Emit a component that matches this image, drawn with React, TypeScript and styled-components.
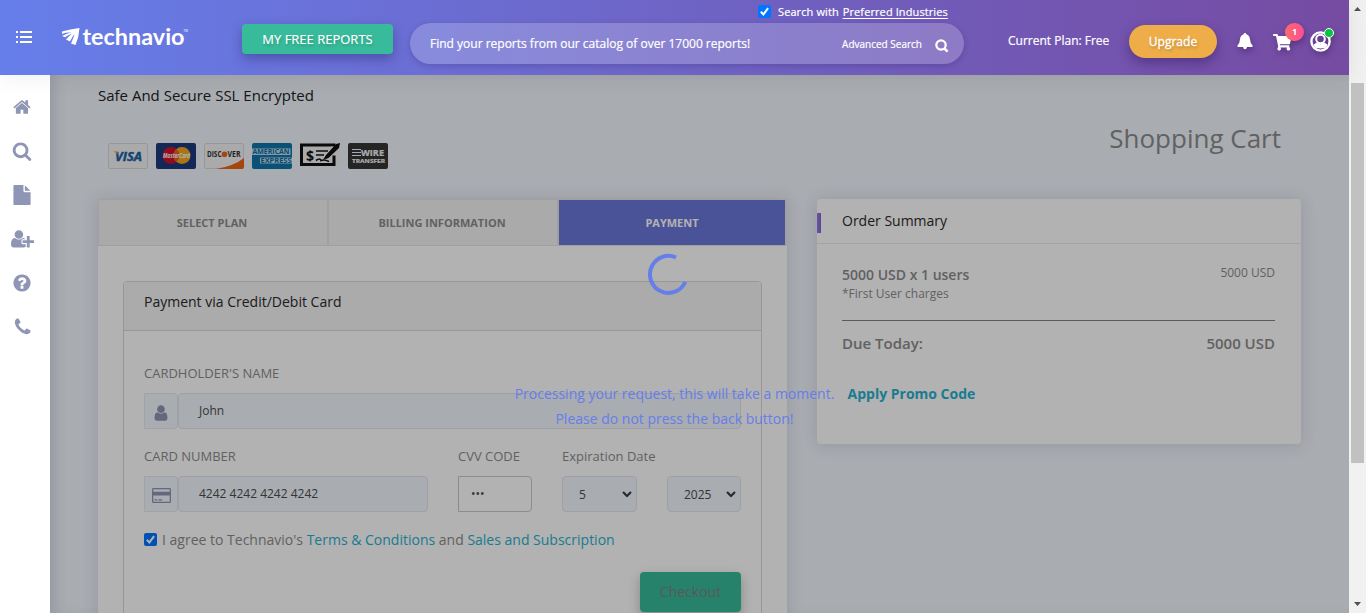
import React from 'react';
import styled, { createGlobalStyle } from 'styled-components';
import { FaShoppingCart } from 'react-icons/fa';

const GlobalStyle = createGlobalStyle`
  *, *::before, *::after { box-sizing: border-box; }
  html, body { margin: 0; padding: 0; overflow: hidden; }
  body { font-family: "Open Sans", "Liberation Sans", sans-serif; font-size: 14px; color: #8c8c8c; }
  svg { overflow: visible; }
`;

const Window = styled.div`
  display: flex;
  width: 1366px;
  height: 613px;
  overflow: hidden;
`;

const Page = styled.div`
  display: flex;
  flex-direction: column;
  width: 1349px;
  height: 613px;
`;

/* ---------- header ---------- */

const Header = styled.header`
  position: relative;
  z-index: 3;
  flex: none;
  display: flex;
  height: 75px;
  color: #fff;
  background: linear-gradient(90deg, #667eea 0%, #764ba2 100%);
  box-shadow: 0 1px 20px rgba(69, 65, 78, 0.1);
`;

const MenuButton = styled.div`
  width: 16px;
  height: 14px;
  margin: 30px 0 0 16px;
  svg { display: block; }
`;

const Logo = styled.div`
  width: 128px;
  height: 24px;
  margin: 25px 0 0 30px;
  svg { display: block; }
`;

const ReportsButton = styled.button`
  width: 151px;
  height: 30px;
  margin: 24px 0 0 52px;
  padding: 0;
  border: 0;
  border-radius: 4px;
  color: #fff;
  background: #38bb9b;
  font: 400 13px/30px "Open Sans", sans-serif;
  text-align: center;
  text-shadow: 1px 2px 3px rgba(0, 0, 0, 0.2);
  -webkit-text-stroke: 0.15px #fff;
  box-shadow: 0 5px 12px rgba(30, 20, 90, 0.35);
`;

const SearchArea = styled.div`
  width: 554px;
  margin-left: 17px;
`;

const SearchOption = styled.label`
  display: flex;
  align-items: center;
  height: 23px;
  padding-left: 348px;
  font-size: 11px;
  letter-spacing: 0.1px;
  white-space: nowrap;
  -webkit-text-stroke: 0.2px #fff;
  u { margin-left: 4px; text-underline-offset: 2px; }
`;

const CheckMark = styled.span<{ $size: number; $gap: number }>`
  flex: none;
  width: ${(p) => p.$size}px;
  height: ${(p) => p.$size}px;
  margin-right: ${(p) => p.$gap}px;
  border-radius: 2px;
  background: #0075ff;
  svg { display: block; width: 100%; height: 100%; }
`;

const SearchBar = styled.div`
  display: flex;
  align-items: center;
  height: 41px;
  padding: 0 15px 0 20px;
  border-radius: 21px;
  background: rgba(255, 255, 255, 0.2);
  box-shadow: 0 2px 6px rgba(40, 20, 90, 0.22);
  -webkit-text-stroke: 0.2px #fff;
`;

const SearchText = styled.span`
  flex: 1;
  font-size: 12px;
`;

const AdvancedLink = styled.span`
  margin-right: 13px;
  font-size: 10px;
`;

const SearchGlyph = styled.svg`
  width: 14px;
  height: 14px;
  margin-top: 4px;
`;

const PlanLabel = styled.span`
  width: 103px;
  margin: 32px 0 0 44px;
  font-size: 12px;
  line-height: 18px;
  white-space: nowrap;
  -webkit-text-stroke: 0.2px #fff;
`;

const UpgradeButton = styled.button`
  width: 88px;
  height: 33px;
  margin: 25px 0 0 18px;
  padding: 0;
  border: 0;
  border-radius: 17px;
  color: #fff;
  background: #eead48;
  font: 400 12px/33px "Open Sans", sans-serif;
  text-shadow: 1px 2px 3px rgba(0, 0, 0, 0.25);
  -webkit-text-stroke: 0.3px #fff;
  box-shadow: 0 5px 12px rgba(40, 15, 80, 0.4);
`;

const HeaderIcon = styled.div<{ $width: number; $top: number; $gap: number }>`
  position: relative;
  width: ${(p) => p.$width}px;
  height: 26px;
  margin: ${(p) => p.$top}px 0 0 ${(p) => p.$gap}px;
  filter: drop-shadow(1px 3px 3px rgba(30, 10, 60, 0.35));
  svg { display: block; }
`;

const CartCount = styled.span`
  position: absolute;
  left: 12px;
  top: -10px;
  width: 19px;
  height: 18px;
  border-radius: 9px;
  background: linear-gradient(90deg, #fb6c6c, #fc4e93);
  font-size: 9px;
  font-weight: 700;
  line-height: 18px;
  text-align: center;
`;

const OnlineDot = styled.span`
  position: absolute;
  left: 14px;
  top: -3px;
  width: 10px;
  height: 10px;
  border: 1px solid #fff;
  border-radius: 50%;
  background: #00c63f;
`;

/* ---------- body ---------- */

const Body = styled.div`
  display: flex;
  flex: 1;
  min-height: 0;
`;

const Sidebar = styled.nav`
  flex: none;
  display: flex;
  flex-direction: column;
  width: 50px;
  padding-top: 10px;
  background: #fff;
`;

const NavItem = styled.a`
  display: flex;
  align-items: center;
  justify-content: center;
  width: 44px;
  height: 44px;
  color: #8f95b4;
`;

const Main = styled.main`
  position: relative;
  flex: 1;
  height: 538px;
  padding: 10px 48px 0;
  overflow: hidden;
  background: #f2f6fd;
  box-shadow: inset 10px 0 14px -6px rgba(69, 65, 98, 0.16);
`;

const Veil = styled.div`
  position: absolute;
  inset: 0;
  background: rgba(0, 0, 0, 0.3);
`;

const Spinner = styled.svg`
  position: absolute;
  left: 597.5px;
  top: 178.5px;
`;

const Progress = styled.p`
  position: absolute;
  left: 0;
  top: 306px;
  width: 1249px;
  margin: 0;
  color: #667eea;
  font-size: 14px;
  line-height: 25px;
  text-align: center;
`;

const Intro = styled.div`
  display: flex;
  justify-content: space-between;
  height: 114px;
`;

const SecureTitle = styled.div`
  color: #222;
  font-size: 15px;
  line-height: 20px;
`;

const PaymentMarks = styled.div`
  display: flex;
  gap: 8px;
  margin: 38px 0 0 10px;
  svg { display: block; }
`;

const PageTitle = styled.h1`
  margin: 35px 20px 0 0;
  font-size: 26px;
  font-weight: 400;
  line-height: 36px;
`;

const Columns = styled.div`
  display: flex;
  align-items: flex-start;
  gap: 30px;
`;

const Checkout = styled.section`
  width: 689px;
  height: 430px;
  background: #fff;
  box-shadow: 0 1px 15px 1px rgba(69, 65, 98, 0.14);
`;

const Tabs = styled.div`
  display: flex;
  height: 47px;
  border: 1px solid #e5e5e5;
`;

const Tab = styled.div<{ $active?: boolean }>`
  flex: ${(p) => (p.$active ? '1' : '0 0 230px')};
  padding-right: ${(p) => (p.$active ? 0 : 2)}px;
  border-right: ${(p) => (p.$active ? '1px solid #e5e5e5' : '2px solid #e5e5e5')};
  color: ${(p) => (p.$active ? '#fff' : '#8c8c8c')};
  background: ${(p) => (p.$active ? '#6b76da' : '#f4f4f4')};
  font-size: 11px;
  font-weight: 700;
  line-height: 46px;
  text-align: center;
`;

const CardPanel = styled.div`
  height: 360px;
  margin: 35px 25px 0;
  border: 1px solid #d9d9d9;
  border-radius: 4px 4px 0 0;
`;

const PanelTitle = styled.h2`
  height: 49px;
  margin: 0;
  padding-left: 20px;
  border-bottom: 1px solid #d9d9d9;
  border-radius: 3px 3px 0 0;
  color: #2a2a2a;
  background: #f5f5f5;
  font-size: 14px;
  font-weight: 400;
  line-height: 40px;
`;

const Form = styled.div`
  padding: 32px 20px 0;
`;

const FieldRow = styled.div`
  display: flex;
  gap: 30px;
  margin-bottom: 17px;
`;

const Field = styled.div<{ $width: number }>`
  width: ${(p) => p.$width}px;
`;

const Label = styled.label`
  display: block;
  height: 20px;
  margin-bottom: 10px;
  font-size: 13px;
  line-height: 21px;
  white-space: nowrap;
`;

const InputGroup = styled.div`
  display: flex;
  height: 36px;
`;

const Addon = styled.span`
  display: flex;
  align-items: center;
  justify-content: center;
  width: 34px;
  padding-top: 3px;
  border: 1px solid #e6e8ee;
  border-radius: 0 4px 4px 0;
  color: #8f95b4;
  background: #f2f6fd;
`;

const Value = styled.span<{ $pad: number; $plain?: boolean; $lift?: number }>`
  display: flex;
  align-items: center;
  flex: 1;
  height: 36px;
  padding: 0 4px ${(p) => p.$lift ?? 0}px ${(p) => p.$pad}px;
  border: 1px solid ${(p) => (p.$plain ? '#c9c9c9' : '#e3e5ea')};
  border-radius: ${(p) => (p.$plain ? '0 4px 4px 0' : '4px')};
  color: #4c4c4c;
  background: ${(p) => (p.$plain ? '#fff' : '#f2f6fd')};
  font-size: 12px;
  svg { margin-left: auto; }
`;

const Agreement = styled.div`
  display: flex;
  align-items: center;
  height: 20px;
  font-size: 14px;
  white-space: pre;
`;

const Link = styled.a`
  color: #27b1cf;
`;

const CheckoutButton = styled.button`
  display: block;
  width: 101px;
  height: 40px;
  margin: 23px 0 0 auto;
  padding: 0;
  border: 0;
  border-radius: 4px;
  color: #808080;
  background: #38bb9b;
  font: 400 14px/40px "Open Sans", sans-serif;
  box-shadow: 0 5px 12px rgba(0, 0, 0, 0.25);
`;

const Summary = styled.section`
  width: 484px;
  height: 245px;
  border-radius: 4px;
  background: #fff;
  box-shadow: 0 1px 15px 1px rgba(69, 65, 98, 0.14);
`;

const SummaryTitle = styled.h2`
  display: flex;
  align-items: center;
  height: 45px;
  margin: 0;
  padding-bottom: 2px;
  border-bottom: 1px solid #ebebeb;
  color: #2a2a2a;
  font-size: 14px;
  font-weight: 400;
  &::before {
    content: "";
    width: 4px;
    height: 20px;
    margin: 6px 21px 0 0;
    background: linear-gradient(90deg, #a476e0, #7568e0);
  }
`;

const SummaryBody = styled.div`
  padding: 20px 26px 0 25px;
`;

const SummaryLine = styled.div`
  display: flex;
  justify-content: space-between;
  font-size: 14px;
  font-weight: 600;
  line-height: 22px;
`;

const Amount = styled.span`
  margin-top: -2px;
  font-size: 12px;
  font-weight: 400;
`;

const Note = styled.div`
  height: 34px;
  font-size: 12px;
  line-height: 15px;
`;

const Total = styled(SummaryLine)`
  padding-top: 11px;
  border-top: 1px solid #828282;
  font-size: 15px;
`;

const Promo = styled.div`
  margin: 29px 0 0 5.5px;
  color: #27b1cf;
  font-size: 14px;
  font-weight: 700;
  line-height: 22px;
`;

/* ---------- scrollbar ---------- */

const Scrollbar = styled.div`
  display: flex;
  flex-direction: column;
  align-items: center;
  width: 17px;
  background: #f1f1f1;
  svg { display: block; }
`;

const Thumb = styled.div`
  width: 13px;
  height: 380px;
  margin: 66px 0 133px;
  background: #c1c1c1;
`;

/* ---------- drawings ---------- */

const Glyph = ({ d, size, box = '0 0 1792 1792' }: { d: string; size: number; box?: string }) => (
  <svg width={size} height={size} viewBox={box} fill="currentColor"><path d={d} /></svg>
);

const homePath = 'M1472 992v480q0 26-19 45t-45 19h-384v-384h-256v384h-384q-26 0-45-19t-19-45v-480q0-1 .5-3t.5-3l575-474 575 474q1 2 1 6zm223-69l-62 74q-8 9-21 11h-3q-13 0-21-7l-692-577-692 577q-12 8-24 7-13-2-21-11l-62-74q-8-10-7-23.5t11-21.5l719-599q32-26 76-26t76 26l244 204v-195q0-14 9-23t23-9h192q14 0 23 9t9 23v408l219 182q10 8 11 21.5t-7 23.5z';
const searchPath = 'M1216 832q0-185-131.5-316.5t-316.5-131.5-316.5 131.5-131.5 316.5 131.5 316.5 316.5 131.5 316.5-131.5 131.5-316.5zm512 832q0 52-38 90t-90 38q-54 0-90-38l-343-342q-179 124-399 124-143 0-273.5-55.5t-225-150-150-225-55.5-273.5 55.5-273.5 150-225 225-150 273.5-55.5 273.5 55.5 225 150 150 225 55.5 273.5q0 220-124 399l343 343q37 37 37 90z';
const filePath = 'M1152 512v-472q22 14 36 28l408 408q14 14 28 36h-472zm-128 32q0 40 28 68t68 28h544v1056q0 40-28 68t-68 28h-1344q-40 0-68-28t-28-68v-1600q0-40 28-68t68-28h800v544z';
const userPlusPath = 'M704 896q-159 0-271.5-112.5t-112.5-271.5 112.5-271.5 271.5-112.5 271.5 112.5 112.5 271.5-112.5 271.5-271.5 112.5zm960 128h352q13 0 22.5 9.5t9.5 22.5v192q0 13-9.5 22.5t-22.5 9.5h-352v352q0 13-9.5 22.5t-22.5 9.5h-192q-13 0-22.5-9.5t-9.5-22.5v-352h-352q-13 0-22.5-9.5t-9.5-22.5v-192q0-13 9.5-22.5t22.5-9.5h352v-352q0-13 9.5-22.5t22.5-9.5h192q13 0 22.5 9.5t9.5 22.5v352zm-736 224q0 52 38 90t90 38h256v238q-68 50-171 50h-874q-121 0-194-69t-73-190q0-53 3.5-103.5t14-109 26.5-108.5 43-97.5 62-81 85.5-53.5 111.5-20q19 0 39 17 79 61 154.5 91.5t164.5 30.5 164.5-30.5 154.5-91.5q20-17 39-17 132 0 217 96h-223q-52 0-90 38t-38 90v192z';
const helpPath = 'M1024 1376v-192q0-14-9-23t-23-9h-192q-14 0-23 9t-9 23v192q0 14 9 23t23 9h192q14 0 23-9t9-23zm256-672q0-88-55.5-163t-138.5-116-170-41q-243 0-371 213-15 24 8 42l132 100q7 6 19 6 16 0 25-12 53-68 86-92 34-24 86-24 48 0 85.5 26t37.5 59q0 38-20 61t-68 45q-63 28-115.5 86.5t-52.5 125.5v36q0 14 9 23t23 9h192q14 0 23-9t9-23q0-19 21.5-49.5t54.5-49.5q32-18 49-28.5t46-35 44.5-48 28-60.5 12.5-81zm384 192q0 209-103 385.5t-279.5 279.5-385.5 103-385.5-103-279.5-279.5-103-385.5 103-385.5 279.5-279.5 385.5-103 385.5 103 279.5 279.5 103 385.5z';
const phonePath = 'M1600 1240q0 27-10 70.5t-21 68.5q-21 50-122 106-94 51-186 51-27 0-53-3.5t-57.5-12.5-47-14.5-55.5-20.5-49-18q-98-35-175-83-127-79-264-216t-216-264q-48-77-83-175-3-9-18-49t-20.5-55.5-14.5-47-12.5-57.5-3.5-53q0-92 51-186 56-101 106-122 25-11 68.5-21t70.5-10q14 0 21 3 18 6 53 76 11 19 30 54t35 63.5 31 53.5q3 4 17.5 25t21.5 35.5 7 28.5q0 20-28.5 50t-62 55-62 53-28.5 46q0 9 5 22.5t8.5 20.5 14 24 11.5 19q76 137 174 235t235 174q2 1 19 11.5t24 14 20.5 8.5 22.5 5q18 0 46-28.5t53-62 55-62 50-28.5q14 0 28.5 7t35.5 21.5 25 17.5q25 15 53.5 31t63.5 35 54 30q70 35 76 53 3 7 3 21z';
const userPath = 'M1536 1399q0 109-62.5 187t-150.5 78h-854q-88 0-150.5-78t-62.5-187q0-85 8.5-160.5t31.5-152 58.5-131 94-89 134.5-34.5q131 128 313 128t313-128q76 0 134.5 34.5t94 89 58.5 131 31.5 152 8.5 160.5zm-256-887q0 159-112.5 271.5t-271.5 112.5-271.5-112.5-112.5-271.5 112.5-271.5 271.5-112.5 271.5 112.5 112.5 271.5z';
const cardPath = 'M1760 128q66 0 113 47t47 113v1216q0 66-47 113t-113 47h-1600q-66 0-113-47t-47-113v-1216q0-66 47-113t113-47h1600zm-1600 128q-13 0-22.5 9.5t-9.5 22.5v224h1664v-224q0-13-9.5-22.5t-22.5-9.5h-1600zm1600 1280q13 0 22.5-9.5t9.5-22.5v-608h-1664v608q0 13 9.5 22.5t22.5 9.5h1600zm-1504-128v-128h256v128h-256zm384 0v-128h384v128h-384z';

const Tick = () => (
  <svg viewBox="0 0 13 13"><path d="M2.8 6.8l2.6 2.6 4.7-6.2" fill="none" stroke="#fff" strokeWidth="2" /></svg>
);

const Chevron = () => (
  <svg width="10" height="7" viewBox="0 0 10 7"><path d="M1 1l4 4 4-4" fill="none" stroke="#3c3c46" strokeWidth="2.2" /></svg>
);

const VisaMark = () => (
  <svg width="40" height="26" viewBox="0 0 40 26">
    <rect x=".5" y=".5" width="39" height="25" rx="1.5" fill="#f4f4f4" stroke="#d8dadd" />
    <text x="7" y="17.5" fontFamily="Open Sans" fontWeight="700" fontStyle="italic" fontSize="12" fill="#1761a8" stroke="#1761a8" strokeWidth=".4" textLength="27" lengthAdjust="spacingAndGlyphs">VISA</text>
    <path d="M5 8.5h4l2 4q-2-3-6-4z" fill="#eda32c" />
  </svg>
);

const MasterMark = () => (
  <svg width="40" height="26" viewBox="0 0 40 26">
    <rect width="40" height="26" rx="2" fill="#1c3a7c" />
    <circle cx="15" cy="12.5" r="8.5" fill="#d3122c" />
    <circle cx="26" cy="12.5" r="8.5" fill="#f4a81f" />
    <path d="M20.5 6a8.5 8.5 0 0 1 0 13a8.5 8.5 0 0 1 0-13z" fill="#e5651f" />
    <text x="7" y="15" fontFamily="Open Sans" fontWeight="700" fontStyle="italic" fontSize="7" fill="#fff" textLength="27" lengthAdjust="spacingAndGlyphs">MasterCard</text>
  </svg>
);

const DiscoverMark = () => (
  <svg width="40" height="26" viewBox="0 0 40 26">
    <rect x=".5" y=".5" width="39" height="25" rx="1.5" fill="#f4f4f4" stroke="#d8dadd" />
    <path d="M40 15v9q0 2-2 2H12q18-3 28-11z" fill="#ec6514" />
    <circle cx="20.5" cy="11.3" r="2.8" fill="#ec6514" />
    <g fontFamily="Open Sans" fontWeight="700" fontSize="8" fill="#333">
      <text x="3" y="14" textLength="14.5" lengthAdjust="spacingAndGlyphs">DISC</text>
      <text x="23.5" y="14" textLength="13" lengthAdjust="spacingAndGlyphs">VER</text>
    </g>
  </svg>
);

const AmexMark = () => (
  <svg width="40" height="26" viewBox="0 0 40 26">
    <rect width="40" height="26" rx="2" fill="#0f75ac" />
    <path d="M0 5.500h38.500v6.500H0zM8 14.500h32v6H8z" fill="#b9dcee" />
    <g fontFamily="Open Sans" fontWeight="700" fontSize="6.5" fill="#0f6a9e">
      <text x="0.5" y="11.2" textLength="37" lengthAdjust="spacingAndGlyphs">AMERICAN</text>
      <text x="8.5" y="20" textLength="31" lengthAdjust="spacingAndGlyphs">EXPRESS</text>
    </g>
  </svg>
);

const CheckPayMark = () => (
  <svg width="40" height="26" viewBox="0 0 40 26">
    <path d="M0 1h40v22H0z" fill="#f4f4f4" />
    <path d="M1.5 2h32.500v19.500h-32.500z" fill="#f4f4f4" stroke="#111" strokeWidth="3" />
    <path d="M31 3.500h6v9h-6z" fill="#f4f4f4" />
    <path d="M16 8h12M16 12h8M16 17.500q4-3 5 0q3-1.500 8 1" fill="none" stroke="#111" strokeWidth="1.6" />
    <path d="M40 0L36 1L26 12L23 17L28.500 15L39 5z" fill="#111" />
    <text x="6" y="17.500" fontFamily="Open Sans" fontWeight="700" fontSize="14" fill="#111">$</text>
  </svg>
);

const WireMark = () => (
  <svg width="40" height="26" viewBox="0 0 40 26">
    <rect width="40" height="26" rx="2" fill="#353537" />
    <path d="M4 6.500h9M4 9.500h9M4 12.500h9" stroke="#f2f2f2" strokeWidth="1.2" />
    <g fontFamily="Open Sans" fontWeight="700" fill="#f4f4f4" stroke="#f4f4f4" strokeWidth=".2">
      <text x="13" y="12.5" fontSize="8.5" textLength="23" lengthAdjust="spacingAndGlyphs">WIRE</text>
      <text x="4" y="19.5" fontSize="6" textLength="33" lengthAdjust="spacingAndGlyphs">TRANSFER</text>
    </g>
  </svg>
);

export default function App() {
  return (
    <Window>
      <GlobalStyle />
      <Page>
        <Header>
          <MenuButton>
            <svg width="16" height="14" fill="#fff">
              <path d="M0 1h2v2H0zM4 1h12v2H4zM0 6h2v2H0zM4 6h12v2H4zM0 11h2v2H0zM4 11h12v2H4z" />
            </svg>
          </MenuButton>
          <Logo>
            <svg width="128" height="24" fill="#fff">
              <path d="M0 6.500Q8 4 17.500 3Q17 12 13.500 20L9 18.500Q11.500 13 12.500 9Q10 12 8 16.500L4 14.500Q7 11 10 8.800Q6 9.800 3 12.300L0 11Q4 8.800 9 7.600Q4 7.400 0 9z" />
              <text x="20.5" y="20" fontFamily="Lato" fontWeight="700" fontSize="22" textLength="102" lengthAdjust="spacingAndGlyphs">technavio</text>
              <text x="121.5" y="7" fontFamily="Open Sans" fontSize="3">TM</text>
            </svg>
          </Logo>
          <ReportsButton>MY FREE REPORTS</ReportsButton>
          <SearchArea>
            <SearchOption>
              <CheckMark $size={13} $gap={7}><Tick /></CheckMark>Search with <u>Preferred Industries</u>
            </SearchOption>
            <SearchBar>
              <SearchText>Find your reports from our catalog of over 17000 reports!</SearchText>
              <AdvancedLink>Advanced Search</AdvancedLink>
              <SearchGlyph viewBox="0 0 14 14">
                <circle cx="6" cy="6" r="4.7" fill="none" stroke="#fff" strokeWidth="2.2" />
                <path d="M9.300 9.300l3.300 3.300" stroke="#fff" strokeWidth="2.6" />
              </SearchGlyph>
            </SearchBar>
          </SearchArea>
          <PlanLabel>Current Plan: Free</PlanLabel>
          <UpgradeButton>Upgrade</UpgradeButton>
          <HeaderIcon $width={16} $top={33} $gap={20}>
            <svg width="16" height="17" fill="#fff">
              <path d="M8 0q1.200 0 1.300 1.300q3.400 1 3.700 5q.2 4.200 2.500 6v1.700H.5v-1.700q2.300-1.800 2.500-6q.3-4 3.700-5Q6.800 0 8 0zM6 14h4q-.3 2.300-2 2.300t-2-2.300z" />
            </svg>
          </HeaderIcon>
          <HeaderIcon $width={20} $top={33} $gap={20}>
            <FaShoppingCart size={18.5} />
            <CartCount>1</CartCount>
          </HeaderIcon>
          <HeaderIcon $width={22} $top={31} $gap={17}>
            <svg width="21" height="21" fill="none" stroke="#fff">
              <circle cx="10.5" cy="10.5" r="9.1" strokeWidth="2.4" />
              <circle cx="10.5" cy="8" r="4.300" strokeWidth="2" />
              <path d="M3.500 13.500l3.500-2q3.500 3.500 7 0l3.500 2q-.5 2-2 3.300q-5 1.500-10 0q-1.500-1.300-2-3.300z" fill="#fff" stroke="none" />
            </svg>
            <OnlineDot />
          </HeaderIcon>
        </Header>
        <Body>
          <Sidebar>
            <NavItem><Glyph d={homePath} size={19} box="50 40 1792 1792" /></NavItem>
            <NavItem><Glyph d={searchPath} size={20} /></NavItem>
            <NavItem><Glyph d={filePath} size={20} /></NavItem>
            <NavItem><Glyph d={userPlusPath} size={23} box="0 -64 2048 2048" /></NavItem>
            <NavItem><Glyph d={helpPath} size={20} /></NavItem>
            <NavItem><Glyph d={phonePath} size={20} box="-60 0 1792 1792" /></NavItem>
          </Sidebar>
          <Main>
            <Intro>
              <div>
                <SecureTitle>Safe And Secure SSL Encrypted</SecureTitle>
                <PaymentMarks>
                  <VisaMark /><MasterMark /><DiscoverMark /><AmexMark /><CheckPayMark /><WireMark />
                </PaymentMarks>
              </div>
              <PageTitle>Shopping Cart</PageTitle>
            </Intro>
            <Columns>
              <Checkout>
                <Tabs>
                  <Tab>SELECT PLAN</Tab>
                  <Tab>BILLING INFORMATION</Tab>
                  <Tab $active>PAYMENT</Tab>
                </Tabs>
                <CardPanel>
                  <PanelTitle>Payment via Credit/Debit Card</PanelTitle>
                  <Form>
                    <FieldRow>
                      <Field $width={597}>
                        <Label>CARDHOLDER'S NAME</Label>
                        <InputGroup>
                          <Addon><Glyph d={userPath} size={18} /></Addon>
                          <Value $pad={20} $lift={2}>John</Value>
                        </InputGroup>
                      </Field>
                    </FieldRow>
                    <FieldRow>
                      <Field $width={284}>
                        <Label>CARD NUMBER</Label>
                        <InputGroup>
                          <Addon><Glyph d={cardPath} size={19} box="0 0 1920 1792" /></Addon>
                          <Value $pad={20} $lift={2}>4242 4242 4242 4242</Value>
                        </InputGroup>
                      </Field>
                      <Field $width={74}>
                        <Label>CVV CODE</Label>
                        <InputGroup><Value $pad={12} $plain $lift={2}>•••</Value></InputGroup>
                      </Field>
                      <Field $width={75}>
                        <Label>Expiration Date</Label>
                        <InputGroup><Value $pad={16}>5<Chevron /></Value></InputGroup>
                      </Field>
                      <Field $width={74}>
                        <Label>&nbsp;</Label>
                        <InputGroup><Value $pad={16}>2025<Chevron /></Value></InputGroup>
                      </Field>
                    </FieldRow>
                    <Agreement>
                      <CheckMark $size={13} $gap={5}><Tick /></CheckMark>
                      I agree to Technavio's <Link>Terms &amp; Conditions</Link> and <Link>Sales and Subscription</Link>
                    </Agreement>
                    <CheckoutButton>Checkout</CheckoutButton>
                  </Form>
                </CardPanel>
              </Checkout>
              <Summary>
                <SummaryTitle>Order Summary</SummaryTitle>
                <SummaryBody>
                  <SummaryLine><span>5000 USD x 1 users</span><Amount>5000 USD</Amount></SummaryLine>
                  <Note>*First User charges</Note>
                  <Total><span>Due Today:</span><span>5000 USD</span></Total>
                  <Promo>Apply Promo Code</Promo>
                </SummaryBody>
              </Summary>
            </Columns>
            <Veil />
            <Spinner width="41" height="41" viewBox="0 0 41 41">
              <path d="M28 3.500A18.500 18.500 0 1 0 37.300 28" fill="none" stroke="#667eea" strokeWidth="4" />
            </Spinner>
            <Progress>
              Processing your request, this will take a moment.<br />Please do not press the back button!
            </Progress>
          </Main>
        </Body>
      </Page>
      <Scrollbar>
        <svg width="17" height="17" fill="#505050"><path d="M5 11l3.500-4 3.500 4z" /></svg>
        <Thumb />
        <svg width="17" height="17" fill="#505050"><path d="M5 6l3.500 4 3.500-4z" /></svg>
      </Scrollbar>
    </Window>
  );
}
